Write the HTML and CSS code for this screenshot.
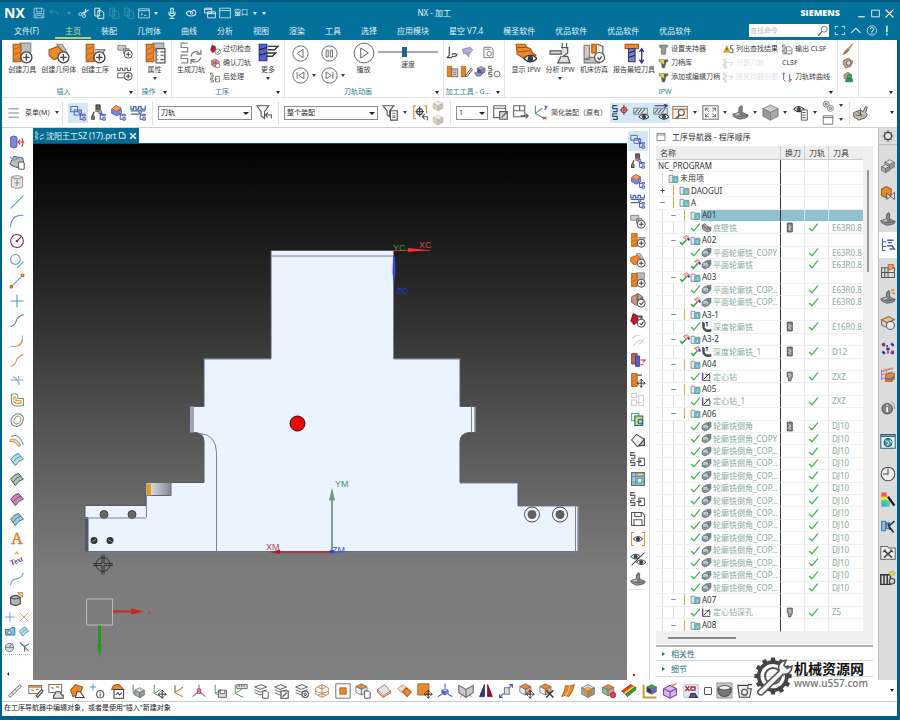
FILE: index.html
```html
<!DOCTYPE html>
<html lang="zh-CN">
<head>
<meta charset="utf-8">
<title>NX - 加工</title>
<link rel="stylesheet" href="styles.css">
</head>
<body>
<header class="titlebar">
  <strong class="logo">NX</strong>
  <div class="quick">
    <button data-icon="save"></button>
    <button class="dim" data-icon="undo"></button>
    <button class="dim" data-icon="dot"></button>
    <button data-icon="cut"></button>
    <button data-icon="copy"></button>
    <button class="dim" data-icon="copy"></button>
    <button class="dim" data-icon="copy"></button>
    <button data-icon="cmdwin"></button>
    <button class="caret gap" aria-label="更多命令"></button>
    <button class="gap" data-icon="mic"></button>
    <button class="gap" data-icon="touch"></button>
    <button data-icon="cascade"></button>
    <button data-icon="window"></button>
    <button class="win-menu">窗口</button>
    <button class="caret" aria-label="窗口菜单"></button>
    <button class="caret" aria-label="自定义"></button>
  </div>
  <h1>NX - 加工</h1>
  <strong class="brand">SIEMENS</strong>
  <div class="winctl">
    <button data-icon="min"></button>
    <button data-icon="max"></button>
    <button data-icon="close"></button>
  </div>
</header>

<nav class="menubar">
  <a href="#" class="file">文件(F)</a>
  <a href="#" class="on">主页</a>
  <a href="#">装配</a>
  <a href="#">几何体</a>
  <a href="#">曲线</a>
  <a href="#">分析</a>
  <a href="#">视图</a>
  <a href="#">渲染</a>
  <a href="#">工具</a>
  <a href="#">选择</a>
  <a href="#">应用模块</a>
  <a href="#">星空 V7.4</a>
  <a href="#">模圣软件</a>
  <a href="#">优品软件</a>
  <a href="#">优品软件</a>
  <a href="#">优品软件</a>
  <label class="search"><input type="search" placeholder="查找命令" aria-label="查找命令"><i data-icon="lens"></i></label>
  <div class="menu-end">
    <button data-icon="full"></button>
    <button data-icon="up"></button>
    <button data-icon="help"></button>
    <button data-icon="bang"></button>
  </div>
</nav>

<section class="ribbon">
  <div class="group g-insert">
    <div class="tools">
      <button class="big"><i data-icon="newtool"></i>创建刀具</button>
      <button class="big"><i data-icon="newgeom"></i>创建几何体</button>
      <button class="big"><i data-icon="newop"></i>创建工序</button>
      <div class="pair"><button data-icon="newprog"></button><button data-icon="newmethod"></button></div>
    </div>
    <footer>插入<span class="caret"></span></footer>
  </div>
  <div class="group g-act">
    <div class="tools"><button class="big"><i data-icon="attr"></i>属性<span class="caret"></span></button></div>
    <footer>操作<span class="caret"></span></footer>
  </div>
  <div class="group g-op">
    <div class="tools">
      <button class="big"><i data-icon="gen"></i>生成刀轨</button>
      <div class="stack">
        <button><i data-icon="gouge"></i>过切检查</button>
        <button><i data-icon="verify"></i>确认刀轨</button>
        <button><i data-icon="post"></i>后处理</button>
      </div>
      <button class="big"><i data-icon="moreop"></i>更多<span class="caret"></span></button>
    </div>
    <footer>工序<span class="caret"></span></footer>
  </div>
  <div class="group g-anim">
    <div class="tools">
      <div class="player">
        <button data-icon="back"></button><span></span><button data-icon="pause"></button><span></span>
        <button data-icon="first"></button><span class="caret"></span><button data-icon="last"></button><span class="caret"></span>
      </div>
      <button class="big play"><i data-icon="play"></i>播放</button>
      <label class="speed"><input type="range" min="0" max="100" value="44">速度</label>
    </div>
    <footer>刀轨动画<span class="caret"></span></footer>
  </div>
  <div class="group g-cam">
    <div class="tools minis">
      <button data-icon="probe"></button><button data-icon="gem"></button><button data-icon="doc"></button>
      <button data-icon="orlist"></button><button data-icon="oredit"></button><button data-icon="blueshape"></button><button data-icon="ssclock"></button>
    </div>
    <footer>加工工具 - G...<span class="caret"></span></footer>
  </div>
  <div class="group g-ipw">
    <div class="tools">
      <button class="big"><i data-icon="showipw"></i>显示 IPW</button>
      <button class="big"><i data-icon="anaipw"></i>分析 IPW<span class="caret"></span></button>
      <button class="big"><i data-icon="machine"></i>机床仿真</button>
      <button class="big"><i data-icon="shortest"></i>报告最短刀具</button>
      <div class="stack">
        <button><i data-icon="holder"></i>设置夹持器</button>
        <button><i data-icon="shank"></i>刀柄库</button>
        <button><i data-icon="shank"></i>添加或编辑刀柄</button>
      </div>
      <div class="stack">
        <button><i data-icon="warnss"></i>列出查找结果</button>
        <button disabled><i data-icon="ss"></i>分割刀轨</button>
        <button disabled><i data-icon="ss"></i>按夹持器分割</button>
      </div>
      <div class="stack">
        <button><i data-icon="ssout"></i>输出 CLSF</button>
        <button>CLSF</button>
        <button><i data-icon="tocurve"></i>刀轨转曲线</button>
      </div>
    </div>
    <footer>IPW<span class="caret"></span></footer>
  </div>
  <div class="group g-side">
    <div class="stack"><button data-icon="brush"></button><button data-icon="wash"></button><button data-icon="greenman"></button></div>
  </div>
  <div class="group g-rest"><footer><span class="caret"></span></footer></div>
</section>

<section class="selbar">
  <button class="menu-btn"><i data-icon="burger"></i>菜单(M)<span class="caret"></span></button>
  <div class="seg">
    <button class="t hot" data-icon="treeprog"></button>
    <button class="t" data-icon="treetool"></button>
    <button class="t" data-icon="treegeom"></button>
    <button class="t" data-icon="treemethod"></button>
  </div>
  <div class="seg">
    <label class="pick wide"><select aria-label="过滤器"><option>刀轨</option></select></label>
    <button class="t" data-icon="funnel"></button>
  </div>
  <div class="seg">
    <label class="pick wide"><select aria-label="选择范围"><option>整个装配</option></select></label>
    <button class="t" data-icon="funnellist"></button><span class="caret"></span>
    <button class="t" data-icon="snap"></button>
    <div class="duo"><button data-icon="cubes"></button><button data-icon="cubes"></button></div>
  </div>
  <div class="seg last">
    <label class="pick"><select aria-label="图层"><option>1</option></select></label>
    <button class="t" data-icon="winedit"></button>
    <button class="t" data-icon="winswap"></button>
    <button class="t" data-icon="csys"></button>
    <span class="note">简化装配（原有）</span>
    <button class="t hot" data-icon="sspoint"></button>
    <button class="t hot" data-icon="hatcheye"></button>
    <button class="t hot" data-icon="hatcharrow"></button>
    <button class="t" data-icon="winlens"></button><span class="caret"></span>
    <button class="t" data-icon="fit"></button><span class="caret"></span>
    <button class="t" data-icon="part"></button><span class="caret"></span>
    <button class="t" data-icon="graycube"></button><span class="caret"></span>
    <button class="t" data-icon="eyelist"></button><span class="caret"></span>
    <div class="duo"><button data-icon="gears"></button><button data-icon="frame"></button></div>
    <div class="duo thin"><span class="caret"></span><span class="caret"></span></div>
  </div>
  <button class="t" data-icon="hand"></button>
  <span class="caret end"></span>
</section>

<main>
  <aside class="left">
    <div class="col" data-tools="cylred sketch cylpink line arc circle tangent lineor plus spline fillet splineor trim offset oval bridge surfblue surfdark surfpink surfteal lettera textpath curve solid"></div>
    <div class="cols2" data-tools="plus cross box3 surfblue ball corner"></div>
    <span class="tri-left"></span>
  </aside>

  <section class="stage">
    <div class="tabs">
      <div class="doc-tab"><i data-icon="gen2"></i>沈阳王工SZ (17).prt<i data-icon="pin"></i><button data-icon="x"></button></div>
    </div>
    <svg class="view" viewBox="33 143 594 537" preserveAspectRatio="xMidYMid slice" role="img" aria-label="零件视图">
      <defs>
        <linearGradient id="metal"><stop offset="0" stop-color="#eceff2"/><stop offset="1" stop-color="#808890"/></linearGradient>
      </defs>
      <path class="body" d="M271 250H393.500V358H460V406H475V432H469Q460 433 460 441V482H518V505H578V551H88V517H85V505H146V482H204V441Q204 433 196 432H190V406H204V358H271Z"/>
      <path d="M190 406h4v26h-4z" fill="#a3a4b5"/>
      <path d="M85 517h3v34h-3z" fill="#555862"/>
      <path d="M146 482h25v13h-25z" fill="url(#metal)" stroke="#666" stroke-width="1"/>
      <path d="M147 483h4v12h-4z" fill="#e69a17"/>
      <g fill="#666" stroke="#444"><circle cx="104" cy="514" r="4"/><circle cx="132" cy="514" r="4"/></g>
      <path class="edge" d="M271 255.500H393M393.500 250V358M204 358.500H271M394 358.500H460M200 433Q216 434 216.500 452V551M85 517.500H146M88 551.500H578M518 482.500H460M518 505.500H578M471.500 406V432M475.500 406V432M575.500 505V551M578.500 505V551M146.500 495V517"/>
      <circle cx="94" cy="540" r="3.500" fill="#333"/><circle cx="110" cy="540" r="3.500" fill="#333"/>
      <path d="M92 541l4-2M108 539l5 3" stroke="#99a"/>
      <g fill="#f4f8ff" stroke="#444"><circle cx="532" cy="514" r="7.500"/><circle cx="560" cy="514" r="7.500"/></g>
      <g fill="#5f5f63"><circle cx="532" cy="514" r="4.500"/><circle cx="560" cy="514" r="4.500"/></g>
      <circle cx="297.500" cy="423" r="7.500" fill="#e30b0b" stroke="#500"/>
      <path d="M393 250H430" stroke="#d22"/><path d="M408 247.500L428 249.500L408 251.500Z" fill="#e33"/>
      <path d="M393 256h2l.5 16-1.500 13-1.500-13z" fill="#3346e6"/>
      <path d="M332 549V498" stroke="#7ba382" stroke-width="2"/><path d="M329 500L332 487L335 500Z" fill="#6d9a78"/>
      <path d="M332 551.500H274" stroke="#b22338" stroke-width="1.500"/><path d="M280 549L270 551.500L280 553.500Z" fill="#9c2234"/>
      <circle cx="332" cy="551" r="2" fill="#33f"/>
      <text x="393" y="250" fill="#3b9b46">YC</text><text x="419" y="247" fill="#d64545">XC</text><text x="396" y="293" fill="#2435d6">ZC</text>
      <text x="335" y="486" fill="#3f9651">YM</text><text x="266" y="549" fill="#b8435a">XM</text><text x="332" y="552" fill="#3b52e0">ZM</text>
      <g fill="none" stroke="#222"><circle cx="103" cy="564" r="7" stroke-width=".8"/><path d="M93 563h9v-9M113 563h-9v-9M93 565h9v9M113 565h-9v9" stroke-width=".8"/></g>
      <path d="M86.500 598.500h26v26h-26z" fill="none" stroke="#bbb"/>
      <path d="M113 610h18v-2l13 3-13 3v-2h-18z" fill="#c9281d"/><text x="148" y="614" fill="#c33" class="tiny">X</text>
      <path d="M98 625h3v19h1l-2.500 12-2.500-12h1z" fill="#25952a"/><text x="97" y="664" fill="#6f8a70" class="tiny">Y</text>
    </svg>
  </section>

  <aside class="right">
    <div class="col" data-tools="treeprog treetool treegeom treemethod newprog newop newgeom newtool millclock gougeclock ghosta moreor ormove ghostb copyteal erase ssdoc map ssdoc floppy eyebr eyeoff part"></div>
    <span class="mark"></span>
  </aside>

  <section class="panel">
    <h2><i data-icon="frame"></i>工序导航器 - 程序顺序</h2>
    <div class="grid-wrap">
      <table>
        <colgroup><col><col class="c1"><col class="c2"><col class="c3"></colgroup>
        <thead><tr><th>名称</th><th>换刀</th><th>刀轨</th><th>刀具</th></tr></thead>
        <tbody id="rows"></tbody>
      </table>
      <div class="vbar"><span></span></div>
    </div>
    <div class="hbar"><span></span></div>
    <button class="fold first">相关性</button>
    <button class="fold">细节</button>
  </section>

  <aside class="res">
    <button class="gear" data-icon="gear"></button>
    <button data-icon="asm"></button>
    <button data-icon="constraint"></button>
    <button data-icon="part"></button>
    <button class="on" data-icon="opnav"></button>
    <button data-icon="machnav"></button>
    <button data-icon="tagpart"></button>
    <button data-icon="reuse"></button>
    <button data-icon="dots"></button>
    <button data-icon="lib"></button>
    <button class="sp" data-icon="info"></button>
    <button class="sp" data-icon="globe"></button>
    <button class="sp" data-icon="clock"></button>
    <button data-icon="palette"></button>
    <button data-icon="bluecut"></button>
    <button data-icon="toolsbox"></button>
    <button data-icon="process"></button>
  </aside>
</main>

<section class="bottombar">
  <div class="strip" data-tools="ruler tagedit tagstamp orstamp plusinfo orhouse csyscube csysmove csysor csyspink csyssave csysgrid layers layersedit layersgear wire square orcopy sheet orsheet ormove2 tri3 book mirror link cubemove cubecut orsurf cubein cubecolor rainbow lcube purplebox xo"></div>
  <div class="tail">
    <input type="checkbox" aria-label="显示">
    <button class="t" data-icon="sphere"></button>
    <button class="t" data-icon="camera"></button>
    <span class="caret end"></span>
  </div>
</section>
<footer class="status">在工序导航器中编辑对象，或者是使用"插入"新建对象</footer>

<div class="stamp">
  <i data-icon="wrench"></i>
  <div><b>机械资源网</b><span>www.u557.com</span></div>
</div>
<script src="app.js"></script>
</body>
</html>
```
FILE: styles.css
```css
* { box-sizing: border-box; }
html { height: 100%; }
body {
  margin: 0;
  height: 100vh;
  padding: 0 3px 4px 2px;
  display: flex;
  flex-direction: column;
  background: #005f8a;
  color: #3c3c3c;
  font: 7px/10px "Noto Sans", "Noto Sans CJK SC", sans-serif;
  overflow: hidden;
}
button {
  margin: 0; padding: 0; border: 0; background: none;
  color: inherit; font: inherit; white-space: nowrap;
  display: flex; align-items: center; justify-content: center;
}
i { display: block; font-style: normal; flex: none; }
button svg, i svg { display: block; width: 100%; height: 100%; flex: none; }
a { color: inherit; text-decoration: none; }

.caret { display: flex; align-items: center; justify-content: center; width: 10px; flex: none; }
.caret::before { content: ""; border: 2px solid transparent; border-top: 3px solid currentColor; border-bottom: 0; }

/* title bar */
.titlebar {
  flex: 0 0 24px; display: flex; align-items: center;
  background: #04719c; color: #e8f6fb; border-top: 2px solid #035a80;
  margin: 0 -3px 0 -2px; padding: 0 5px 0 4px;
}
.logo { width: 27px; font: bold 14px/20px "Open Sans", sans-serif; color: #fff; }
.quick { display: flex; align-items: center; flex: 1; }
.quick button { width: 15px; height: 12px; }
.quick button svg { width: 12px; }
.quick .dim { opacity: .25; }
.quick .caret { width: 9px; }
.quick .gap { margin-right: 4px; }
.quick .win-menu { width: 18px; font-size: 7px; }
h1 { flex: 0 0 36px; margin: 0; font: 8px/12px "Noto Sans", "Noto Sans CJK SC", sans-serif; white-space: nowrap; }
.brand { flex: 1; margin-right: 16px; text-align: right; font: 900 9px/12px "Open Sans", sans-serif; color: #fff; }
.winctl { display: flex; gap: 3px; }
.winctl button { width: 11px; height: 11px; }

/* menu */
.menubar {
  flex: 0 0 16px; display: flex; align-items: stretch;
  margin: 0 -3px 0 -2px; padding: 0 5px 0 4px;
  background: #04719c; color: #e4f3f9; font-size: 8px; line-height: 13px;
}
.menubar a { padding: 0 10px; white-space: nowrap; border-bottom: 2px solid transparent; height: 15px; }
.menubar .file { width: 51px; }
.menubar .on { color: #cfe07a; border-color: #b9cf62; }
.search { display: flex; align-items: center; margin: 0 0 3px auto; width: 80px; height: 13px; background: #fff; }
.search input { flex: 1; min-width: 0; border: 0; padding: 0 1px; background: none; font: inherit; font-size: 7px; height: 11px; outline: 0; appearance: none; }
.search input::placeholder { color: #b5bcc0; }
.search i { width: 12px; height: 12px; }
.menu-end { display: flex; gap: 4px; width: 66px; padding: 0 2px 3px 5px; }
.menu-end button { width: 12px; height: 13px; }

/* ribbon */
.ribbon { flex: 0 0 58px; display: flex; background: #fff; border-bottom: 1px solid #e2e2e2; }
.group { position: relative; display: flex; flex-direction: column; flex: none; border-right: 1px solid #e6e6e6; padding-top: 2px; }
.group footer { position: relative; margin-top: auto; display: flex; align-items: center; justify-content: center; height: 10px; padding-right: 12px; color: #2f7d98; }
.group footer .caret { position: absolute; right: 1px; color: #222; }
.tools { display: flex; flex: 1; }
.big { flex-direction: column; justify-content: flex-start; line-height: 12px; }
.big i { width: 22px; height: 22px; }
.big .caret { height: 4px; }
.pair { display: flex; flex-direction: column; gap: 4px; width: 24px; align-items: center; }
.pair button { width: 16px; height: 18px; }
.stack { display: flex; flex-direction: column; }
.stack button { height: 14px; justify-content: flex-start; gap: 2px; }
.stack button:disabled { color: #cfcfcf; opacity: .6; }
.stack i { width: 11px; height: 11px; }
.g-insert { width: 136px; }
.g-insert .big { width: 37px; }
.g-insert .big:first-child { margin-left: 2px; }
.g-act { width: 34px; }
.g-act .big { width: 33px; }
.g-op { width: 113px; }
.g-op .big { width: 38px; }
.g-op .stack { width: 43px; }
.g-op .stack + .big { width: 30px; }
.g-anim { width: 159px; }
.player { display: grid; grid-template-columns: 17px 12px 17px 12px; grid-template-rows: 22px 22px; align-items: center; padding-left: 7px; }
.player button { width: 17px; height: 17px; }
.play { width: 27px; }
.speed { display: flex; flex-direction: column; align-items: center; width: 62px; margin-left: 0; padding-top: 4px; gap: 2px; }
.speed input { appearance: none; width: 60px; height: 12px; margin: 0; background: linear-gradient(#a8a8a8, #a8a8a8) center / 100% 2px no-repeat; }
.speed input::-webkit-slider-thumb { appearance: none; width: 5px; height: 10px; background: #17688c; }
.g-cam { width: 61px; }
.minis { display: grid; grid-template-columns: repeat(4, 14px); grid-template-rows: 20px 18px; align-items: center; padding-left: 2px; align-content: start; }
.minis button { width: 13px; height: 13px; }
.minis button:nth-child(2) { justify-self: end; }
.minis button:nth-child(3) { grid-column: 3 / 5; justify-self: center; }
.g-cam footer { white-space: nowrap; }
.g-ipw { width: 333px; }
.g-ipw .big { width: 34px; }
.g-ipw .big:nth-child(1) { margin-left: 4px; }
.g-ipw .big:nth-child(4) { width: 46px; }
.g-ipw .stack:nth-child(5) { width: 66px; padding-left: 1px; }
.g-ipw .stack:nth-child(6) { width: 59px; }
.g-side { width: 21px; align-items: center; }
.g-side button { width: 12px; justify-content: center; }
.g-side button svg { height: 12px; }
.g-rest { flex: 1; border: 0; }

/* selection bar */
.selbar { flex: 0 0 30px; display: flex; align-items: center; background: #fff; border-bottom: 1px solid #cfcfcf; padding: 0 0 0 5px; }
.menu-btn { width: 55px; gap: 2px; justify-content: flex-start; }
.menu-btn i { width: 14px; height: 14px; margin-right: 2px; }
.seg { display: flex; align-items: center; height: 24px; border-left: 1px solid #e2e2e2; padding: 0 4px 0 5px; }
.seg.last { border-right: 1px solid #e2e2e2; flex: none; }
.t { width: 20px; height: 20px; flex: none; }
.t svg { width: 17px; height: 17px; }
.hot { background: #d3e8f2; }
.seg .caret { width: 10px; }
.pick { position: relative; display: flex; width: 32px; margin-right: 2px; }
.pick.wide { width: 94px; }
.pick select { appearance: none; width: 100%; height: 14px; border: 1px solid #8d8d8d; border-radius: 0; background: #fff; color: #222; font: inherit; padding: 0 2px; }
.pick::after { content: ""; position: absolute; right: 3px; top: 6px; border: 3px solid transparent; border-top-color: #222; border-bottom: 0; }
.duo { display: flex; flex-direction: column; gap: 2px; width: 16px; align-items: center; }
.duo button { width: 12px; height: 12px; }
.duo .caret { height: 12px; }
.duo.thin { width: 9px; }
.note { white-space: nowrap; margin: 0 3px 0 1px; }
.caret.end { margin-left: auto; color: #222; }

/* work area */
main { flex: 1; min-height: 0; display: flex; background: #fff; }
.left, .right { display: flex; flex-direction: column; background: #fff; flex: none; }
.left { width: 31px; padding-top: 4px; }
.right { width: 23px; padding-top: 3px; border-right: 1px solid #d5d5d5; }
.col { flex: 1; display: flex; flex-direction: column; align-items: center; min-height: 0; }
.col button { flex: 1; width: 20px; min-height: 0; }
.col svg { width: 16px; height: 16px; }
.left .col { padding-right: 2px; }
.right .col button:first-child { background: #d3e8f2; }
.cols2 { display: grid; grid-template-columns: 14px 14px; grid-auto-rows: 15px; border-bottom: 1px dotted #bbb; margin: 0 3px 0 1px; }
.cols2 svg { width: 12px; height: 12px; }
.tri-left { height: 25px; display: flex; align-items: flex-end; padding: 0 0 4px 5px; }
.tri-left::before { content: ""; border: 2px solid transparent; border-right-color: #222; border-left: 0; }
.mark { height: 91px; border-top: 1px solid #e6e6e6; margin: 0 2px; display: flex; align-items: flex-end; padding: 0 0 4px 4px; }
.mark::before { content: ""; width: 2px; height: 2px; background: #933; }

.stage { flex: 1; min-width: 0; display: flex; flex-direction: column; }
.tabs { flex: 0 0 15px; display: flex; background: #fff; border-bottom: 1px solid #0a4f6c; }
.doc-tab { display: flex; align-items: center; gap: 2px; height: 15px; padding: 0 2px; background: #046c93; color: #eaf6fb; font-size: 8px; white-space: nowrap; }
.doc-tab i { width: 9px; height: 9px; }
.doc-tab button { width: 8px; height: 8px; }
.view { flex: 1; min-height: 0; width: 100%; display: block; background: linear-gradient(#020202, #141414 13%, #333 34%, #4c4c4c 48%, #6a6a6a 67%, #7c7c7c 80%, #808080); }
.view .body { fill: #eaf3ff; stroke: #555a66; stroke-width: 1; }
.view .edge { fill: none; stroke: #7d828e; stroke-width: 1; }
.view text { font: 9px "Liberation Sans", sans-serif; }
.view .tiny { font-size: 6px; }

/* navigator */
.panel { width: 228px; flex: none; display: flex; flex-direction: column; padding: 0 5px 3px 6px; background: #fff; }
h2 { flex: 0 0 18px; margin: 0; display: flex; align-items: center; gap: 6px; font-size: 8px; font-weight: 400; color: #333; }
h2 i { width: 10px; height: 10px; }
.grid-wrap { flex: 1; min-height: 0; display: flex; background: #efefef; }
table { width: 207px; height: 100%; border-collapse: separate; border-spacing: 0; table-layout: fixed; background: #fff; }
.c1 { width: 24px; } .c2 { width: 24px; } .c3 { width: 34px; }
th { height: 14px; padding: 0 4px; background: #eee; border-right: 1px solid #ccc; border-bottom: 1px solid #ccc; font-weight: 400; font-size: 8px; text-align: left; white-space: nowrap; }
th:last-child { border-right: 0; }
td { padding: 0; height: 12px; border-bottom: 1px solid #f1f1f1; border-right: 1px solid #ececec; font-size: 8px; line-height: 10px; white-space: nowrap; color: #8aa99b; }
td:first-child { border-right-color: #333; }
td .cell { display: flex; align-items: center; height: 100%; padding-left: 1px; }
td i { width: 11px; height: 11px; }
td:nth-child(2) i, td:nth-child(3) i { margin: 0 0 0 3px; }
td:nth-child(4) { padding-left: 3px; border-right: 0; }
.cell span { padding-left: 1px; }
.group-row span { color: #333; }
.guide { background: linear-gradient(#dcdcdc, #dcdcdc) 5px 0 / 1px 100% no-repeat; align-self: stretch; height: auto; }
.picked td { background: #8fc0d0; border-right-color: #c5e0e8; }
.picked td:first-child { background: linear-gradient(90deg, #fff 45px, #8fc0d0 45px); border-right-color: #333; }
.vbar { width: 10px; display: flex; justify-content: center; padding-top: 24px; }
.vbar span { width: 2px; height: 22%; background: #999; }
.hbar { flex: 0 0 12px; background: #efefef; padding: 5px 0 0 12px; }
.hbar span { display: block; width: 33%; height: 2px; background: #888; }
.fold { height: 16px; justify-content: flex-start; gap: 6px; padding-left: 6px; border-bottom: 1px solid #cdd9de; color: #1e6b8a; font-size: 8px; }
.fold.first { border-top: 2px solid #b5b5b5; margin-top: 1px; }
.fold::before { content: ""; border: 2px solid transparent; border-left: 3px solid #1e6b8a; border-right: 0; }

.res { width: 19px; flex: none; background: #dcdcdc; display: flex; flex-direction: column; border-left: 1px solid #bdbdbd; }
.res button { height: 26px; }
.res svg { width: 16px; height: 16px; }
.res .gear { height: 17px; margin-bottom: 9px; border-bottom: 1px solid #bbb; }
.res .gear svg { width: 12px; height: 12px; }
.res .on { background: #fff; }
.res .sp { margin-top: 7px; }

/* bottom */
.bottombar { flex: 0 0 22px; display: flex; align-items: center; background: #fff; border-bottom: 1px solid #c5cdd0; padding-left: 3px; }
.strip { flex: 1; display: flex; }
.strip button { flex: 1; height: 20px; }
.strip svg { width: 16px; height: 16px; }
.tail { flex: 0 0 196px; display: flex; align-items: center; }
.tail input { appearance: none; width: 8px; height: 8px; margin: 0 2px 0 3px; border: 1px solid #555; border-radius: 1px; }
.status { flex: 0 0 14px; background: #fff; color: #222; padding: 1px 2px; }

.stamp { position: absolute; right: 32px; bottom: 22px; display: flex; align-items: center; gap: 1px; }
.stamp i { width: 40px; height: 44px; }
.stamp b { display: block; font: bold 14px/20px "Noto Sans CJK SC", sans-serif; color: #111; margin-top: -6px; }
.stamp span { display: block; font: 600 10px/10px "Open Sans", sans-serif; color: #777; }
```
FILE: app.js
```js
// Drawing helpers; every icon lives on a 20 x 20 canvas.
const P = (d, s = '#555', f = 'none', w = 1.3) => `<path d="${d}" stroke="${s}" fill="${f}" stroke-width="${w}"/>`;
const C = (x, y, r, s = '#555', f = 'none', w = 1.3) => `<circle cx="${x}" cy="${y}" r="${r}" stroke="${s}" fill="${f}" stroke-width="${w}"/>`;
const O = '#ea8a2e', D = '#a5560f', G = '#b9bcc0', B = '#4a55b5', T = '#4c9fb0';

const cube = (x, y, s, t, l, r, k = '#666') =>
  P(`M${x - s} ${y - s / 2}L${x} ${y - s}L${x + s} ${y - s / 2}L${x} ${y}Z`, k, t, .9) +
  P(`M${x - s} ${y - s / 2}L${x} ${y}V${y + s}L${x - s} ${y + s / 2}Z`, k, l, .9) +
  P(`M${x + s} ${y - s / 2}L${x} ${y}V${y + s}L${x + s} ${y + s / 2}Z`, k, r, .9);
const plusBadge = C(14, 14, 5, '#444', '#fff', 1.2) + P('M14 11v6M11 14h6', '#444');
const clockBadge = C(14, 14, 5, '#444', '#fff', 1.2) + P('M12 14l2 2 3-4', '#444');
const treeBadge = P('M12 9v9h6M12 13h6', B, 'none', 1.2) + P('M10.500 8h3v3h-3zM15 12h3v2h-3zM15 16h3v3h-3z', B, '#c9cdf2', 1);
const column = P('M2 2h7v16h-7z', D, O, 1) + P('M2 7l7-3M2 12l7-3M2 17l7-3', '#c66a1a', 'none', 1);
const ss = (c = '#555', x = 2) => P(`M${x + 6} 2h-5v3.500h5V9h-5M${x + 6} 11.500h-5v3h5V18h-5`, c, 'none', 1.4);
const eye = (x, y, c = '#333') => P(`M${x - 6} ${y}Q${x} ${y - 6} ${x + 6} ${y}Q${x} ${y + 6} ${x - 6} ${y}Z`, c, '#fff', 1.2) + C(x, y, 2, c, '#247', 1);
const axes = P('M4 2v11l10 5M4 13l8-5', '#4c9a5c', 'none', 1.2);
const layers = P('M2 5l8-3 7 3-8 3z', '#555', '#eee', 1.1) + P('M2 8.500l7 3 8-3M2 12l7 3 8-3', '#555', 'none', 1.1);
const move = P('M14 9v10M9 14h10M12 11l2-2 2 2M12 17l2 2 2-2M11 12l-2 2 2 2M17 12l2 2-2 2', '#333', 'none', 1.2);
const page = P('M12 10h5l2 2v7h-7z', '#555', '#fff', 1.2);
const bolt = (a, b) => P('M3 2h14v4h-3v12l-4 1-4-1V6H3z', a, b, 1);
const hatch = P('M2 5h16v7h-16z', '#678', '#dbe6e8', 1) + P('M3 11l4-5M7 11l4-5M11 11l4-5', '#567', 'none', 1.2);
const surf = (a, b) => P('M2 9Q7 2 12 2L18 9Q12 10 8 17Z', a, b, 1.2) + P('M5 13Q9 6 15 5', a, 'none', 1);
const partShape = P('M1 12l7-2V6q0-3 3-4l1 1v7l7 3q0 3-5 4-6 2-10-1-3-1-3-4z', '#555', '#8e8f91', 1) + P('M8 10q2 3 5 0M8 6q2-1 3-3M3 13q6 3 11 1l5-1M9 12q3 0 4 2', '#5a5a5a', 'none', .9) + P('M2 12l6-2 2 2-4 2z', '#666', '#c4c5c7', .6);

const ICONS = {
  save: P('M2 2h14l2 2v14H2zM6 2v6h8V2M5 18v-7h10v7M7 14h6', '#bfe0ee'),
  undo: P('M8 4L3 8l5 4M3 8h9q5 0 5 6', '#fff'), dot: P('M7 9h6l-3 3z', '#fff', '#fff'),
  cut: C(4, 12, 2.5, '#def') + C(10, 15, 2.5, '#def') + P('M6 11L18 5M11 13L13 3', '#def', 'none', 1.8),
  copy: P('M3 2h8v13H3zM8 6h6l4 4v9H8z', '#e3f2f8', '#04719c', 1.6),
  cmdwin: P('M1 3h18v15H1zM1 6h18M5 10l3 2-3 2M10 14h4', '#cfe6ef'),
  mic: P('M8 2h4v9H8zM5 8v3q0 4 5 4t5-4V8M10 15v4M6 19h8', '#dff', 'none', 1.7),
  touch: P('M2 10q4-5 8-2l4-3q4 0 4 5t-8 5q-6 0-8-5z', '#cfe6ef', 'none', 1.8) + C(11, 10, 2, '#fff'),
  cascade: P('M1 2h12v8H1zM1 4h12M6 8h13v10H6zM6 11h13', '#e3f2f8', '#04719c', 1.5),
  window: P('M1 2h18v16H1zM1 6h18', '#e3f2f8'),
  min: P('M4 16h12', '#fff', 'none', 2), max: P('M3 4h14v12H3z', '#fff', 'none', 1.5), close: P('M3 3l14 14M17 3L3 17', '#fff', 'none', 2.4),
  lens: C(12, 7, 5, '#555') + P('M8 11l-6 7', '#555', 'none', 2),
  full: P('M2 7V3h5M13 3h5v4M18 13v4h-5M7 17H2v-4', '#cde9f3', 'none', 1.6), up: P('M2 14l8-8 8 8', '#e3f2f8', 'none', 1.8),
  help: C(10, 10, 8, '#e3f2f8') + P('M7 8q0-3 3-3t3 3-3 3v2M10 14v2', '#e3f2f8', 'none', 1.6), bang: P('M10 2v11M10 15v3', '#fff', 'none', 2.4),

  newtool: P('M8 1h10v8l-5 3H8z', '#888', G, 1) + column + plusBadge,
  newgeom: P('M8 2h5l5 9v5h-4z', '#888', G, 1) + P('M1 7l8-3 4 4v6l-8 2-4-4z', D, O, 1) + plusBadge,
  newop: column + P('M10 7h9l-2 3h-7', '#666', '#ddd', 1) + plusBadge,
  newprog: P('M1 3h10v6H1zM8 7h7v6H8z', '#777', '#ccc', 1) + plusBadge,
  newmethod: P('M1 3v4h3V4h3v3h3V4h3v3h4V3M1 10v6h9M1 10h16', '#666') + plusBadge,
  attr: P('M8 1h10v7H8z', '#888', G, 1) + column + P('M11 6h8v13h-8z', '#555', '#fff', 1.2) + P('M12 9h1M15 9h3M12 12h1M15 12h3M12 16h1M15 16h3', '#555', 'none', 1),
  gen: P('M7 1H1v4h6v4H1M7 12H1v3h6v4H1', '#888', 'none', 1.1) + P('M10 13q1-5 6-4l2 2M19 7v4h-4M19 14q-2 5-7 4l-2-2M10 20v-4h4', '#777', 'none', 1.1),
  gen2: ss('#dff', 0) + P('M11 13q1-5 7-3v-4M19 14q-1 5-7 3v3', '#dff', 'none', 1.6),
  gouge: P('M4 2l6 3v7l-5 4-4-5z', '#800', '#b3202c', 1) + clockBadge,
  verify: P('M2 5l8-3 7 4v7l-7 4-7-4z', '#855', '#c99', 1) + P('M3 6l12 7M4 12l8-7M11 5v10', '#b33', 'none', 1.2) + C(14, 14, 4, '#555', '#fff'),
  post: ss('#555', 0) + P('M10 8h7v10h-7zM8 13h6', '#555'),
  moreop: P('M2 2h7v15H2z', '#2a2d8c', '#5960cc', 1) + P('M2 7l7-2M2 12l7-2', '#222', 'none', 1) + P('M10 4h9l-3 3h-6M9 10h8l-3 3H9', '#333'),
  moreor: P('M2 2h7v13H2z', '#333a8c', '#d65a3a', 1) + P('M7 5h5v13H7z', '#24388c', '#5960cc', 1) + P('M13 10h6l-3 3M13 16h4', '#b33'),
  back: C(10, 10, 9, '#666', '#fff', 1.1) + P('M13 5v10l-7-5z', '#666', 'none', 1.1), pause: C(10, 10, 9, '#666', '#fff', 1.1) + P('M6 6h2.500v8H6zM11 6h2.500v8H11z', '#666', 'none', 1.1),
  play: C(10, 10, 9, '#666', '#fff', .9) + P('M7 5.500l7 4.500-7 4.500z', '#666', 'none', .9),
  first: C(10, 10, 9, '#666', '#fff', 1.1) + P('M14 6v8l-6-4zM6 6v8', '#666', 'none', 1.1), last: C(10, 10, 9, '#666', '#fff', 1.1) + P('M6 6v8l6-4zM14 6v8', '#666', 'none', 1.1),
  probe: P('M5 1v13l-3 4h7M9 14q2-4 8-1-1 4-8 3', '#444', 'none', 1.8), gem: P('M2 5l12-3 4 4-5 5-9 1z', '#777', '#b6a8dc', 1) + P('M8 12l4 5 1-6', '#777', '#9bc', 1),
  doc: P('M3 2h11l3 3v13H3zM5 5h8', '#666') + C(11, 12, 3.5, '#666'),
  orlist: column + P('M9 6h9v12H9z', '#555', '#f4e6dc') + P('M11 9h5M11 12h5M11 15h5', '#555'), oredit: column + P('M8 17L17 5l2 2L11 18z', '#444', '#ddd'),
  blueshape: cube(11, 8, 6, '#aac', '#557', '#88b') + P('M1 12h12l-3 5H4z', '#336', '#86a9e0', 1), ssclock: ss('#555', 0) + C(14, 14, 4.5),
  showipw: P('M1 2h8l2 3 3 1 2 4 3 2-6 6L2 11z', D, O, 1) + P('M2 5l9 0M3 9l11-1', D, 'none', 1) + eye(14, 15),
  anaipw: P('M1 8h10v3H1zM11 5h6v5l-4 3h4l2 6H8l3-6', '#555', '#ddd', 1.1) + P('M12 1v5M16 1v5', '#555', 'none', 1),
  machine: P('M1 3h5v13H1zM6 14h9v5H1v-3z', '#777', '#ccc', 1) + P('M8 2h4v8H8z', D, O, 1) + P('M13 2l5 2v10', '#666', 'none', 1.2) + C(15, 14, 4.5, '#444', '#fff', 1) + P('M13 14l2 2 2-3'),
  shortest: P('M2 2h12v4H2z', D, O, 1) + P('M5 6h6v12H5z', '#3b3f86', '#7b82c8', 1) + P('M5 10l6-2M5 14l6-2', '#224', 'none', 1) + P('M17 7v11M15 9l2-3 2 3M15 16l2 3 2-3', '#2a3690', 'none', 1.2),
  holder: bolt('#555', '#999'), shank: P('M2 3h16v4h-3l-3 11h-4L5 7H2z', '#777', '#555', 1) + P('M2 3h9v9l-6-4z', '#aa3', '#e7d94c', .8),
  warnss: P('M1 15L7 3l6 12z', '#a87a08', '#f0b82e', 1) + P('M7 7v5', '#222', 'none', 1.6) + P('M18 3h-4v6h4v7h-5', '#445', 'none', 1.5),
  ss: ss('#999', 0) + P('M10 8h8l-4 6', '#999'), ssout: ss('#555', 0) + P('M8 5h7l3 3v10H8zM10 12h6', '#555'), tocurve: P('M3 3v11l3 3M14 4v10h4', '#7a5aa8', 'none', 1.8) + C(3, 3, 1.5, '#36c') + C(14, 16, 1.5, '#b36'),
  brush: P('M18 1L9 10l2 2z', '#964', '#c96', 1) + P('M9 10q-4 2-7 9 7-2 9-7z', '#653', '#b8864a', 1), wash: P('M2 6l9-4 7 5-4 9-8 2-4-6z', '#755', '#c9a08c', 1.2) + C(11, 10, 4, '#444', '#ddd'), greenman: P('M3 6l7-4 6 4v7H4z', '#855', '#b98', 1) + P('M6 18q0-7 6-7t6 7z', '#174', '#2a9a44', 1) + C(12, 9, 3, '#174', '#4b5'),

  burger: P('M2 4h15M2 10h15M2 16h15', '#777', 'none', 1.3),
  treeprog: P('M1 3h8v6H1zM5 7h8v6H5z', '#556aa5', '#dde6f2', 1.2) + treeBadge, treetool: P('M7 1h5v8H7z', '#333', '#666', 1) + P('M5 9l-3 6v3h3v-4M12 9l3 4', '#444', '#a88') + P('M6 8h7', '#c93', 'none', 2) + treeBadge,
  treegeom: P('M2 6l5-4 6 3v6l-5 3-6-3z', B, '#7f88d6', 1) + P('M2 6l6 2 5-3-6-3z', '#d2691e', '#f0a060', 1) + treeBadge, treemethod: P('M1 2v4h3V3h3v3h3V3h3v3h5V2M1 8h17M1 12h10', '#3f6a9f', 'none', 1.4) + treeBadge,
  funnel: P('M1 2h14l-5 7v8l-4-3V9z', '#555') + P('M12 13h6v4M14 10l-3 3 3 3', '#555'), funnellist: P('M1 2h13l-5 6v7l-3-2V8z', '#555') + P('M10 8h8v11h-8z', '#555', '#fff') + P('M12 11h4M12 14h4M12 16h4', '#555', 'none', 1),
  snap: P('M5 2H2v15h3M14 2h3v9', O) + C(9, 9, 3.5, '#444') + P('M9 3v12M4 9h10', '#444') + P('M13 15h5v4M15 12l-3 3 3 3'), cubes: cube(10, 10, 8, '#f2f0ec', '#d8d4c8', '#c8c2b4', '#b0a898'),
  winedit: P('M2 2h14v6M2 2v14h7M2 5h14', '#666') + P('M9 9h9v9H9zM11 16l6-6', '#555', '#ddd'), winswap: P('M2 2h13v13H2zM2 8h13M9 2v6', '#666') + P('M10 14h8M16 11l3 3-3 3', '#555', '#fff'),
  csys: P('M4 2v9l10 6M4 11l8-6', '#5b9a7c') + P('M13 15l4 3M17 15l-4 3', '#c55') + P('M15 2l2 3M18 2l-3 5', B),
  sspoint: ss('#2a4a7a', 0) + C(14, 7, 3, '#a33') + P('M14 1v12M9 7h10', '#a33'), hatcheye: hatch + eye(14, 15), hatcharrow: P('M3 2h14M14 0l4 2-4 3', '#338') + hatch + eye(14, 15),
  winlens: P('M1 3h17v14H1zM1 6h17', '#b07a52', '#fff6ee') + C(11, 10, 3.5, '#555') + P('M9 13l-4 4', '#555', 'none', 2), fit: P('M1 2h18v16H1z', '#777', '#fafafa') + P('M4 8V5h4M12 5h4v3M16 12v3h-4M8 15H4v-3M4 5l4 4M16 5l-4 4M4 15l4-4M16 15l-4-4', '#555', 'none', 1),
  part: partShape, graycube: cube(10, 10, 9, '#ccc', '#999', '#aaa', '#777'), eyelist: eye(8, 6) + P('M11 7h7v12h-7zM12 10h4M12 13h4M12 16h4', '#555', '#fff', 1.1),
  gears: C(7, 7, 5, '#777', '#ddd') + C(14, 14, 5, '#777', '#eee') + C(14, 14, 2) + C(7, 7, 1.5), frame: P('M2 3h16v14H2zM2 6h16', '#555'),
  hand: P('M2 10l8-3 3 2 3-6 2 1-2 6 2 2-2 4-8 3-6-4z', '#555', '#c4bda8', 1.1) + P('M6 9l6 4M4 13l8 1M10 5v8', '#555', 'none', 1),

  cylred: P('M2 4q4-3 8 0v12q-4 3-8 0z', '#4450a8', '#7c88dc', 1) + P('M12 10h7M16 5q3 5 0 11M14 7l-3 3 3 3', '#d33', 'none', 1.4), sketch: P('M1 13L6 3l11 2 2 8-9 4z', '#555', '#b8bcc2', 1.2) + P('M1 3l5 5 8-4', T) + page,
  cylpink: P('M3 4q7-4 14 0v12q-7 4-14 0z', '#a77', '#e4e2e8', 1) + P('M3 4q7 4 14 0M10 7v8M7 11h6', '#687', 'none', 1), line: P('M2 18L18 2', '#5a9dc0'), arc: P('M2 18Q2 2 18 3', '#6a94c0'),
  circle: C(10, 10, 8, '#8a2a44') + P('M10 10l5-5', '#222') + C(10, 10, 1, '#8a2a44', '#822'), tangent: C(8, 8, 6, '#4a9aa8') + P('M10 19L18 11', '#4a9ac0'), lineor: P('M3 17L17 3', '#5a9dc0') + C(3, 17, 1.7, '#c61', O) + C(17, 3, 1.7, '#c61', O),
  plus: P('M10 2v16M2 10h16', '#4a9ac0'), spline: P('M2 17Q8 15 9 10T18 2', '#3c7f98'), fillet: P('M2 17h6q9 0 9-14', '#9ab0a0') + P('M11 16q5-3 6-8', O), splineor: P('M2 17Q8 15 9 10T18 2', '#d08a3a'),
  trim: P('M2 10h16M5 6q6 2 8 10M12 5v4', '#7ba8b8'), offset: P('M3 3q9-3 8 5h7v9q-15 2-15-5z', '#6a9a6a') + P('M6 6q3-1 3 5h6v3q-10 1-9-3z', O), oval: P('M3 14Q1 8 8 3q6-3 10 4 0 10-8 11-6 0-7-4z', '#5a8a8a') + P('M6 13q0-5 4-8 5 0 5 5-1 5-6 5z', '#b97'),
  bridge: P('M3 6q9-6 15 10', '#4a9ac0') + P('M2 9q8-2 13 8l-3 1Q8 11 1 12z', '#b74', '#f0d0b4', 1), surfblue: surf('#3a86a8', '#b8dfe8'), surfdark: surf('#3a5056', '#b2c2c4'), surfpink: surf('#547', '#d488b0'), surfteal: surf('#3a7a86', '#9cc8cf'),
  lettera: '<text x="10" y="16" text-anchor="middle" font-family="Liberation Serif" font-size="20" fill="#e07a20" stroke="#e07a20" stroke-width=".6">A</text>', textpath: '<text x="1" y="15" transform="rotate(-20 10 12)" font-family="Liberation Serif" font-weight="bold" font-size="9" fill="#5a2a90">Text</text>' + P('M7 4l3-3 2 3', '#db3', '#fc5'),
  curve: P('M2 18Q2 11 9 10T18 2', '#5aa4b4'), solid: P('M2 8q6-5 12 0v8q-6 4-12 0z', '#444', '#b5b5b5') + P('M2 8q6 4 12 0', '#444') + P('M11 2h6v6l-4-3z', '#b74', '#f2c48e', 1),
  cross: P('M3 3l14 14M17 3L3 17', '#b98a5a'), box3: P('M2 6h7l3-3h6v12H3z', '#267a98', '#8cc8d8', 1.6) + C(9, 11, 3, '#267', '#fff'), ball: C(9, 11, 7, '#567', '#cdd') + P('M2 11h14M16 2L9 10', '#576'), corner: P('M3 3l8 6v9M11 9l7-4', '#268a98', 'none', 2) + P('M10 9l8 8', '#c54', 'none', 2),

  millclock: P('M2 6l8-4 6 4v6l-8 5-6-4z', '#755', '#c99c80', 1) + P('M9 2v9l7-4', '#555') + clockBadge, gougeclock: P('M4 2l6 3v7l-5 4-4-5z', '#800', '#b3202c', 1) + P('M9 5h6v5', '#444', '#777') + clockBadge,
  ghosta: P('M3 8L8 4h5M4 17l6-6h4l4-3M12 15l5-4', '#ccc'), ormove: column + P('M9 4h6', '#777', 'none', 2) + move, ghostb: P('M2 2h6v5H2zM2 10h6v7H2zM11 4h6v13h-6zM8 5h3M8 13h6', '#ccc'),
  copyteal: P('M2 2h9v9H2z', '#4a8', '#dff') + P('M6 5h10v12H6z', '#266', '#d8d080') + C(13, 12, 3, '#267', '#9cc'), erase: P('M2 10L8 3l10 6-4 8-5 1z', '#555', '#eee') + P('M11 17l7-8v8z', '#444', '#bbb'), ssdoc: ss('#555', 0) + P('M11 9h7v9h-7zM8 13h6M12 11l2 2-2 2', '#555'),
  map: P('M2 2h16v16H2z', '#55728a', '#a8c8d0', 1.5) + P('M2 7h16M7 2v16M3 14h14', '#6a86b0', 'none', 1.2) + P('M9 9h6v6H9z', '#3a8aa0', '#d8f0e4', 1.2) + P('M9 3h7v3H9z', '#b93', '#e8d070', 1), floppy: P('M2 2h13l3 3v13H2zM6 2v5h8V2M5 18v-7h10v7', '#555'), eyebr: P('M5 2H2v16h3M15 2h3v16h-3', O) + eye(10, 10), eyeoff: eye(7, 7) + P('M2 18L18 2', '#444') + eye(14, 14),

  folder: P('M2 4h6l1 2h9v11H2z', '#777', '#e8eef0', 1.4) + P('M8 7h9v10H8z', '#4d9db0', '#6cb5c4', 1) + P('M12 11h3M12 14h3', '#fff', 'none', 1),
  check: P('M2 11l5 5L18 3', '#3cb54a', 'none', 2.3), pcheck: P('M2 13l4 4L14 8', '#35a844', 'none', 2.8) + P('M8 4l6-3 5 4-5 5z', '#b55', '#eac0b0', 1.2) + P('M16 6l3 4', '#33a', 'none', 3),
  barline: P('M10 0v20', '#e3a640', 'none', 1.8), minus: P('M6 10h8', '#777', 'none', 1.6), plusx: P('M6 10h8M10 6v8', '#444', 'none', 1.8),
  face: P('M2 6l5-3 5 5 6 2v6l-8 2-7-5z', '#444', '#aaa', 1.2) + P('M3 6l9 8M11 9l6 5', '#333'), mill: P('M2 9l3-3 6-3 7-1v8l-4 5-7 3-5-3z', '#4a5a66', '#7d93a2', 1.1) + P('M5 8h7v6H5z', '#fff', '#b4c2c4', .8) + P('M13 3v6l4-2M4 14l8-1', '#354', 'none', 1) + P('M9 4l5-1', '#b86', 'none', 2),
  deep: P('M3 2l3 2v8q3 5 9 4l3-1v4H9q-6-3-6-9z', '#223', '#566', 1.2) + P('M11 2v8M8 3h5', '#44a', 'none', 2), drill: P('M3 3v14h14M5 15L16 4M8 7h8v8', '#334', 'none', 1.6) + P('M3 3v14', '#63a', 'none', 2),
  chg: P('M6 2h9v16H6z', '#444', '#888', 1.6) + P('M8 6l5 3-5 3 5 3', '#eee', 'none', 1.3), chgd: P('M6 2h9v9l-3 7H8V11H6z', '#555', '#999', 1.6) + P('M8 5l5 3-4 3', '#eee'),

  gear: C(10, 10, 6, '#444', 'none', 2) + P('M10 1v3M10 16v3M1 10h3M16 10h3M4 4l2 2M14 14l2 2M16 4l-2 2M4 16l2-2', '#444', 'none', 2),
  asm: cube(12, 7, 6, '#ddd', '#aaa', '#999') + cube(7, 12, 5, '#ddd', '#aaa', '#999'), constraint: P('M2 5l6-3 6 3v8l-6 3-6-3z', D, O) + P('M8 10l10 8V9l-9 9z', '#555', '#eee', 1.2), opnav: P('M3 2v15h4M3 6h5M3 12h5', B) + P('M9 4h8M10 7h5M9 11h6l3 4h-6', B, 'none', 1.8), machnav: P('M2 6h16v12H2zM6 6v12M10 6v12M2 12h16', '#555', '#ddd') + P('M10 2h7l-1 5-5 2z', '#b53', '#ec9a70', 1),
  tagpart: partShape + P('M14 2l4-1M15 5l4 1', O, 'none', 2), reuse: P('M2 6l9-4 7 4-9 4z', '#865', '#f0c080') + P('M2 6v6l5 3', '#865') + C(13, 13, 5, '#555', '#e8eef0'), dots: P('M3 3l3 3M3 13l3 3M14 3l3 3M14 13l3 3M8 10h4', '#33a', 'none', 3) + P('M6 3l-3 3M17 12l-3 4M9 5v3M10 12v4', '#a35', 'none', 2),
  lib: P('M2 3v13M2 6l14-4M2 10l14-4M2 15l8-3', '#a878b8') + P('M3 4l13-3M8 4v8', O, 'none', 1) + P('M7 10l4-2h7v7l-3 3H7z', D, O, 1) + P('M7 15h7l3-3', '#36c', '#8ad', 2), info: C(9, 11, 6.5, '#555', '#888') + P('M9 9v6M9 6v1', '#fff', 'none', 2) + P('M14 2q5 3 4 9', '#999'), globe: P('M1 2h18v17H1z', '#367', '#e8f2f5') + P('M1 4h18', '#367', 'none', 2) + C(10, 12, 5, '#256', '#4a9ab0') + P('M7 9l4 3-2 4M12 9l3 3', '#bde'),
  clock: C(10, 10, 8.5, '#444', '#eee') + P('M10 3v7H4', '#444'), palette: P('M2 1h6v6H2z', '#e33', '#f55', .5) + P('M2 6h6v4H2z', '#dd3', '#ee3', .5) + P('M2 10h6v4H2z', '#3c5', '#4d6', .5) + P('M2 14h6v4H2z', '#39d', '#4ae', .5) + P('M8 11h4v7H8z', '#3b9', '#5cb', .5) + P('M10 6l8 11', '#222', 'none', 3), bluecut: P('M2 4h5v12H2zM8 6h4v7H8z', '#47a', '#8ab8dc') + P('M18 4L11 10l6 8M10 7l3 8', '#234', 'none', 2), toolsbox: P('M1 3h8l2 2h8v14H1z', '#666', '#eee') + P('M5 8l10 9M15 8L5 17M4 10l3-3M13 7l3 3', '#444', 'none', 1.8),
  process: P('M1 6h12v12H1zM5 6v12M9 6v12', '#333', '#ddd', 1.8) + P('M11 4l5-3 3 4-5 3z', '#aa3', '#e8d84a', 1) + C(15, 14, 3.5, '#444', '#ccc'),

  ruler: P('M2 16L16 2l2 2L4 18z', '#444', '#fff', 1.1) + P('M6 12l2 2M10 8l2 2M14 4l1 1', '#666', 'none', 1), tagedit: P('M1 3h16v10H1z', '#777', '#fff') + P('M1 5h16M4 8l3 2M10 8h3', '#d08030', 'none', 1.8) + P('M10 16l7-8 2 2-7 8z', '#444', '#ddd'), tagstamp: P('M1 2h16v10H1z', '#777', '#fff') + P('M4 5l3 2M10 5h4', '#d08030', 'none', 1.8) + P('M8 15l2-4h5l2 4h2v4H7v-4z', '#444', '#ddd'),
  orstamp: P('M2 9L8 2l9 3-3 9-9 3z', D, O) + P('M10 11h4l5 7H8z', '#444', '#fff'), plusinfo: P('M5 1v8M1 5h8', '#4a9ac0') + C(14, 14, 4.5) + P('M14 13v4M14 11v1', '#444'), orhouse: P('M2 8q2-7 9-6l6 6z', D, O) + P('M5 8h12v11H5zM7 15l3-3 2 3 3-3', '#444', '#fff'), csyscube: axes + cube(12, 12, 6, '#ddd', '#aaa', '#999'), csysmove: axes + move,
  csysor: P('M5 3v9l10 5M5 12l10-7', '#d08030') + P('M5 3v9', '#5a8'), csyspink: P('M10 2v8L2 17M10 10l8 7M6 13h8', '#b5607a') + P('M8 8l2-1 2 1v3H8z', '#a56'), csyssave: axes + P('M8 9h10v9H8zM10 9v4h6V9', '#555', '#ddd', 1.1), csysgrid: axes + P('M6 2h13v5H6zM9 2v3M12 2v3M15 2v3', '#555', '#ddd', 1),
  layers: layers + page, layersedit: layers + P('M10 10h9v9h-9z', '#444', '#fff') + P('M12 17l5-5', '#444', 'none', 1.6), layersgear: layers + C(14, 14, 4, '#444', '#fff') + C(14, 14, 1.5), wire: P('M2 6l8-4 8 4v8l-8 4-8-4z', '#b98a5e', '#fdf6ee', 1.1) + P('M2 10q8 5 16 0M10 2v16M5 5q5 4 10 0M5 15q5-3 10 0', '#b07a4a', 'none', 1), square: P('M1 1h18v18H1z', '#555', '#fff', 1) + P('M6 6h8v8H6z', D, O, 1),
  orcopy: cube(8, 8, 7, O, '#eee', '#ddd') + page, sheet: P('M2 8l9-6 7 8-9 6z', '#c86a40', '#dde4f0', 1.1) + P('M2 8v3l7 7 9-6v-2', '#c5602c', 'none', 1.3), orsheet: P('M2 7l7-5 4 4-6 6z', '#c98a50', '#f5dcc4', 1) + P('M8 11l5-5 6 5-5 6z', D, O), ormove2: P('M1 1h14v14H1z', D, O, 1) + move, tri3: cube(10, 11, 4, '#cdf', '#57b', '#79d', B) + P('M10 6V1M6 14l-5 3M14 14l5 3', B), book: P('M1 3l9 5 9-5v9l-9 6-9-6z', '#666', '#ccc') + P('M10 8v10', '#666') + P('M3 18l4-5M17 18l-3-5', '#b85', 'none', 1.2),
  mirror: P('M8 2v15H2z', '#223', '#333a8c', 1) + P('M12 2v15h6z', '#611', '#a04', 1), link: P('M8 6h6v8H8z', '#777', '#dde') + P('M2 18l5-5M2 14v4h4M18 2l-4 4M18 6V2h-4', B, 'none', 1.4), cubemove: cube(8, 8, 7, O, '#eee', '#e0a070') + move, cubecut: cube(8, 8, 7, O, '#eee', '#e0a070') + P('M9 9l9 9M18 9l-9 9', '#333', 'none', 1.7), orsurf: P('M7 3q5 2 11-1-1 8-7 15-5-3-9 0Q6 11 7 3z', D, O, 1) + P('M12 4q-1 7-5 12', '#f8c890'), cubein: cube(10, 10, 8, '#dfe4e2', '#a3b0ae', '#8f9c9a') + cube(10, 10, 5, '#f0b070', O, '#d8782a', '#a86'), cubecolor: cube(9, 9, 7, O, '#8b9', '#d8a080') + C(15, 15, 3.5, '#a24', '#d34a5a', 1),
  rainbow: P('M1 10L12 2l7 4L8 16z', '#822', '#e8442c', 1) + P('M4 12l11-8 2 1L6 14z', '#bb2', '#f0d43c', 1) + P('M6 14l11-8 2 2-11 9z', '#272', '#38a048', 1), lcube: P('M2 2v16h16', '#c6a030', 'none', 2.5) + cube(12, 8, 6, '#3a3', '#336', '#66c'), purplebox: P('M2 7l8-4 8 4v8l-8 4-8-4z', '#7a3aa8', '#d8b8ec') + P('M2 7l8 4 8-4M10 11v8', '#7a3aa8') + P('M12 3l6-2', O, 'none', 2), xo: P('M1 2h18v16H1z', '#a9c4dc', '#dce9f5', 1) + P('M3 4l5 6M8 4L3 10M10 5h5v4h-5z', '#b22', 'none', 1.6) + P('M10 13h5l3 5H8z', '#334', '#557'),
  sphere: P('M1 1h18v18H1z', '#999', '#c4c4c4', 1) + P('M2 8q0 9 8 9t8-9z', '#333', '#777', 1) + P('M2 7q8-6 16 0-8 5-16 0z', '#444', '#eee', 1), camera: P('M2 4h12v4h4l-2 10H4z', '#444', '#eee') + C(10, 12, 3.5, '#444') + P('M14 3h5', '#444', 'none', 1.6),
  pin: P('M3 3h8l5 5v8H3z', '#fff', 'none', 2) + P('M11 3v5h5', '#fff'), x: P('M3 3l14 14M17 3L3 17', '#fff', 'none', 4),
};

const teeth = Array.from({ length: 12 }, (_, i) => `<path d="M8.700 3.400L9 .700h2l.3 2.700z" fill="#444" transform="rotate(${i * 30} 10 10)"/>`).join('');
ICONS.wrench = teeth + P('M14.500 4.800A7 7 0 1 0 16.800 9', '#444', 'none', 1.8) + C(10, 10, 4, '#555', 'none', 1)
  + P('M2.500 17.500L13 7.500q-1-3.500 2-5l1.500-.4-1 2.500 1.500 1.500 2.500-1q0 4-4.500 4.200L4.500 19.500q-2.500 0-2-2z', '#555', '#f4f4f4', .8);

const draw = name => `<svg viewBox="0 0 20 20" aria-hidden="true">${ICONS[name]}</svg>`;

document.querySelectorAll('[data-tools]').forEach(bar => {
  bar.innerHTML = bar.dataset.tools.split(' ').map(n => `<button data-icon="${n}"></button>`).join('');
});
document.querySelectorAll('[data-icon]').forEach(el => {
  el.innerHTML = draw(el.dataset.icon);
  if (el.tagName === 'BUTTON') el.setAttribute('aria-label', el.dataset.icon);
});

// Program order tree: [level, text, status, icon, tool change, tool]
const chamfer = Array.from({ length: 12 }, () => [4, '轮廓铣倒角_COP...', 'check', 'mill', '', 'DJ10']);
const DATA = [
  [0, 'NC_PROGRAM'], [1, '未用项'], [2, 'DAOGUI', 'barline', 'plusx'], [2, 'A', 'barline', 'minus'],
  [3, 'A01', 'barline'], [4, '底壁铣', 'check', 'face', 'chg', 'E63R0.8'],
  [3, 'A02', 'pcheck'], [4, '平面轮廓铣_COPY', 'check', 'mill', '', 'E63R0.8'], [4, '平面轮廓铣', 'pcheck', 'mill', '', 'E63R0.8'],
  [3, 'A03', 'pcheck'], [4, '平面轮廓铣_COP...', 'check', 'mill', '', 'E63R0.8'], [4, '平面轮廓铣_COP...', 'pcheck', 'mill', '', 'E63R0.8'],
  [3, 'A3-1', 'barline'], [4, '深度轮廓铣', 'check', 'deep', 'chg', 'E16R0.8'],
  [3, 'A3-2', 'pcheck'], [4, '深度轮廓铣_1', 'pcheck', 'deep', 'chg', 'D12'],
  [3, 'A04', 'barline'], [4, '定心钻', 'check', 'drill', 'chgd', 'ZXZ'],
  [3, 'A05', 'barline'], [4, '定心钻_1', 'check', 'drill', '', 'ZXZ'],
  [3, 'A06', 'barline'], [4, '轮廓铣倒角', 'check', 'mill', 'chg', 'DJ10'], [4, '轮廓铣倒角_COPY', 'check', 'mill', '', 'DJ10'], ...chamfer,
  [3, 'A07', 'barline'], [4, '定心钻深孔', 'check', 'drill', 'chgd', 'Z5'], [3, 'A08', 'barline'],
];
const slot = n => n ? `<i>${draw(n)}</i>` : '<i class="guide"></i>';
document.getElementById('rows').innerHTML = DATA.map(([lv, text, st, ic, chg, tool]) => {
  const slots = [[], ['', 'folder'], [ic, st, 'folder'], ['', 'minus', st, 'folder'], ['', '', '', st, ic]][lv];
  const cls = (lv < 4 ? 'group-row' : '') + (text === 'A01' ? ' picked' : '');
  return `<tr class="${cls}"><td><div class="cell">${slots.map(slot).join('')}<span>${text}</span></div></td>` +
    `<td>${chg ? slot(chg) : ''}</td><td>${tool ? slot('check') : ''}</td><td>${tool || ''}</td></tr>`;
}).join('');
```
